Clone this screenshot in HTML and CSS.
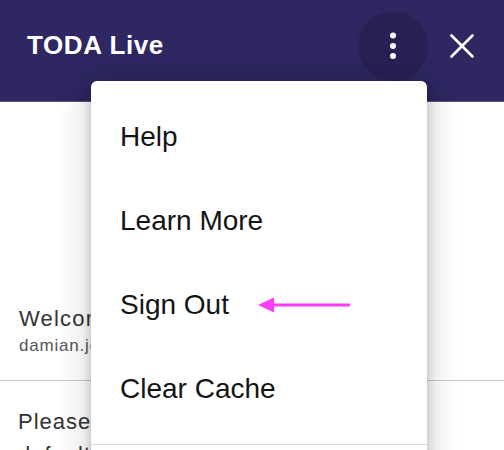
FILE: index.html
```html
<!DOCTYPE html>
<html>
<head>
<meta charset="utf-8">
<link rel="stylesheet" href="styles.css">
</head>
<body>
<header class="topbar">
  <h1 class="title">TODA Live</h1>
  <div class="actions">
    <button class="icon-btn kebab" aria-label="More">
      <svg width="24" height="30" viewBox="0 0 24 30"><circle cx="12" cy="4.5" r="3" fill="#fff"/><circle cx="12" cy="15" r="3" fill="#fff"/><circle cx="12" cy="25" r="3" fill="#fff"/></svg>
    </button>
    <button class="icon-btn close" aria-label="Close">
      <svg width="24" height="24" viewBox="0 0 24 24"><path d="M1.5 1.5 L22.5 22.5 M22.5 1.5 L1.5 22.5" stroke="#fff" stroke-width="2.6" stroke-linecap="round"/></svg>
    </button>
  </div>
</header>
<main class="content">
  <section class="welcome">
    <div class="welcome-title">Welcome</div>
    <div class="welcome-email">damian.jones@example.com</div>
  </section>
  <section class="notice">
    <p>Please select your default account.</p>
  </section>
</main>
<nav class="menu">
  <div class="menu-item">Help</div>
  <div class="menu-item">Learn More</div>
  <div class="menu-item">Sign Out</div>
  <div class="menu-item">Clear Cache</div>
  <div class="menu-divider"></div>
  <div class="menu-item">Version</div>
</nav>
<svg class="arrow" width="96" height="18" viewBox="0 0 96 18"><path d="M8 9 H92" stroke="#fd3cfb" stroke-width="3"/><path d="M0 9 L16 1.5 L16 16.5 Z" fill="#fd3cfb"/></svg>
</body>
</html>
```
FILE: styles.css
```css
* { box-sizing: border-box; }
html, body { margin: 0; padding: 0; }
body {
  width: 504px;
  height: 450px;
  overflow: hidden;
  background: #fff;
  font-family: "Liberation Sans", Arial, sans-serif;
  position: relative;
}
.topbar {
  height: 102px;
  background: #2e2762;
  display: flex;
  align-items: center;
  justify-content: space-between;
  padding: 0 18px 10px 27px;
  border-bottom: 1px solid #5a5480;
}
.title {
  margin: 0;
  color: #fff;
  font-size: 26px;
  font-weight: bold;
  letter-spacing: 0.6px;
}
.actions {
  display: flex;
  align-items: center;
}
.icon-btn {
  border: 0;
  background: transparent;
  padding: 0;
  display: flex;
  align-items: center;
  justify-content: center;
  cursor: pointer;
}
.kebab {
  width: 70px;
  height: 70px;
  border-radius: 50%;
  background: #282154;
}
.close {
  width: 48px;
  height: 48px;
  margin-left: 10px;
}
.content { color: #333; }
.welcome {
  padding: 19px 18px 24px 19px;
  border-bottom: 1px solid #c8c8c8;
  height: 279px;
  display: flex;
  flex-direction: column;
  justify-content: flex-end;
}
.welcome-title {
  font-size: 22px;
  letter-spacing: 1.2px;
  color: #333;
  line-height: 26px;
}
.welcome-email {
  font-size: 17px;
  letter-spacing: 0.8px;
  color: #555;
  margin-top: 4px;
  line-height: 20px;
}
.notice p {
  margin: 0;
  padding: 24px 18px 0 18px;
  max-width: 290px;
  font-size: 22px;
  letter-spacing: 1px;
  line-height: 33px;
  color: #333;
}
.menu {
  position: absolute;
  left: 91px;
  top: 81px;
  width: 336px;
  height: 460px;
  background: #fff;
  border-radius: 6px;
  padding-top: 14px;
  box-shadow: 0 5px 5px -3px rgba(0,0,0,.2), 0 8px 10px 1px rgba(0,0,0,.14), 0 3px 28px 8px rgba(0,0,0,.14);
}
.menu-item {
  height: 84px;
  display: flex;
  align-items: center;
  padding-left: 29px;
  font-size: 28px;
  color: #141414;
}
.menu-divider {
  height: 1px;
  background: #d8d8d8;
  margin-top: 13px;
}
.arrow {
  position: absolute;
  left: 258px;
  top: 296px;
}
```
